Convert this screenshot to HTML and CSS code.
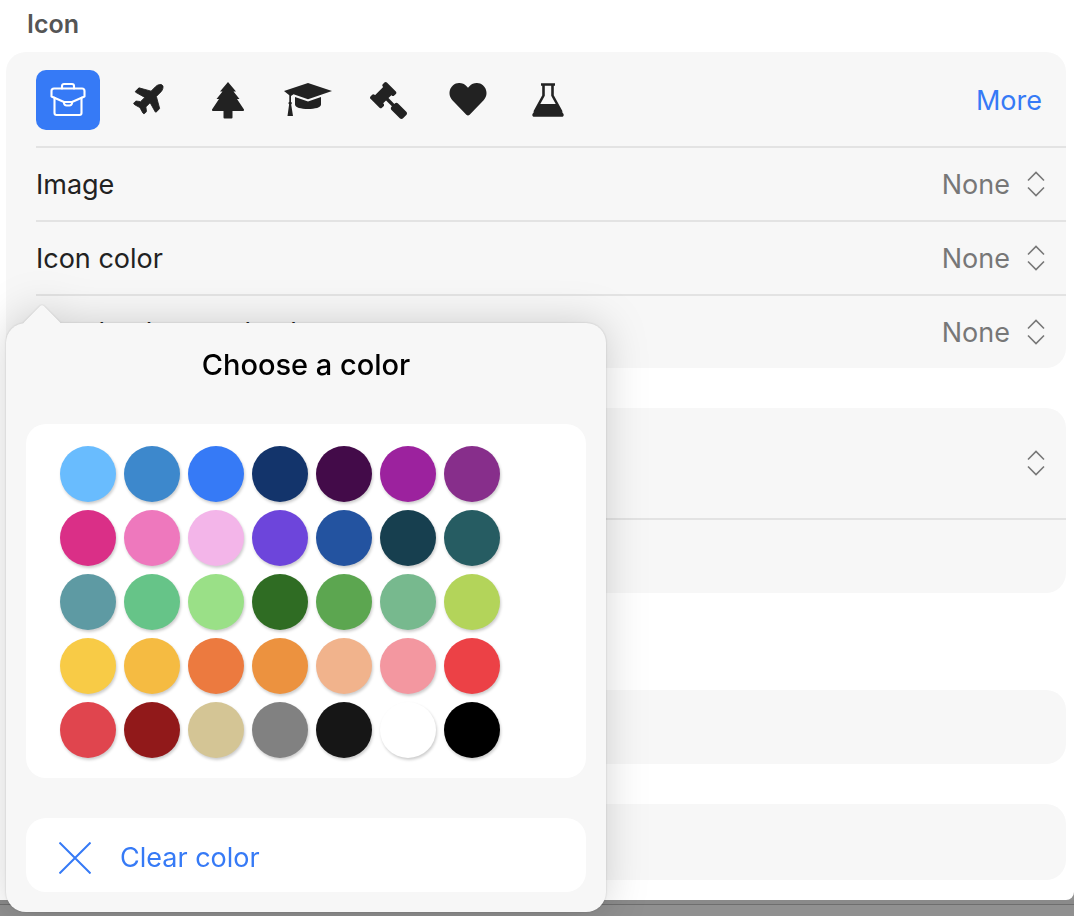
FILE: index.html
```html
<!DOCTYPE html>
<html lang="en">
<head>
<meta charset="utf-8">
<title>Icon settings</title>
<link rel="stylesheet" href="styles.css">
</head>
<body>
<main class="sheet">
  <h2 class="heading">Icon</h2>
  <section class="card">
    <div class="icon-row">
      <button class="icon-btn selected">
        <svg width="36" height="36" viewBox="0 0 36 36" fill="none" stroke="#fff" stroke-width="2.1" stroke-linejoin="round" stroke-linecap="round"><path d="M12 6.500V4a2 2 0 0 1 2-2h8a2 2 0 0 1 2 2v2.500"/><path d="M1.500 14.500V9A2.500 2.500 0 0 1 4 6.500h28A2.500 2.500 0 0 1 34.500 9v5.500L22 20h-8z"/><path d="M4.500 15.700V31a2 2 0 0 0 2 2h23a2 2 0 0 0 2-2V15.700"/><path d="M14 20v1a2.500 2.500 0 0 0 2.500 2.500h3A2.500 2.500 0 0 0 22 21v-1"/></svg>
      </button>
      <button class="icon-btn">
        <svg class="plane" width="34" height="30" viewBox="0 0 576 512"><path fill="#222" stroke="#222" stroke-width="14" d="M480 192H365.710L260.610 8.060A16.014 16.014 0 0 0 246.710 0h-65.500c-10.630 0-18.300 10.170-15.380 20.390L214.860 192H112l-43.200-57.600c-3.020-4.030-7.770-6.400-12.800-6.400H16.010C5.600 128-2.040 137.780.49 147.880L32 256 .49 364.120C-2.040 374.220 5.600 384 16.010 384H56c5.040 0 9.780-2.370 12.800-6.400L112 320h102.860l-49.030 171.600c-2.920 10.220 4.750 20.400 15.380 20.400h65.500c5.740 0 11.040-3.080 13.890-8.060L365.710 320H480c35.350 0 96-28.650 96-64s-60.650-64-96-64z"/></svg>
      </button>
      <button class="icon-btn">
        <svg width="32" height="38" viewBox="0 0 32 38"><path fill="#222" d="M16 1l8 9.500h-2.500l6 7.500h-2.500L32 28.500c.4.800 0 1.500-1 1.500H20.500v6.500a1 1 0 0 1-1 1h-7a1 1 0 0 1-1-1V30H1c-1 0-1.400-.7-1-1.500L7 18H4.500l6-7.500H8z"/></svg>
      </button>
      <button class="icon-btn">
        <svg width="48" height="34" viewBox="0 0 48 34"><path fill="#222" d="M24 0l24 8-24 8.200-14.500-5L7 13v5.800l1 1.300-.8 1.400L9 33H3.500l1.600-11.500-.8-1.400 1-1.300v-6.500L0 8z"/><path fill="#222" d="M11 14l13 4.500L37 14v7.500C37 24.500 31 26 24 26s-13-1.500-13-4.500z"/></svg>
      </button>
      <button class="icon-btn">
        <svg class="flip" width="37" height="37" viewBox="0 0 512 512"><path fill="#222" d="M504.971 199.362l-22.627-22.627c-9.373-9.373-24.569-9.373-33.941 0l-5.657 5.657L329.608 69.255l5.657-5.657c9.373-9.373 9.373-24.569 0-33.941L312.638 7.029c-9.373-9.373-24.569-9.373-33.941 0L154.246 131.480c-9.373 9.373-9.373 24.569 0 33.941l22.627 22.627c9.373 9.373 24.569 9.373 33.941 0l5.657-5.657 39.598 39.598-81.040 81.040-5.657-5.657c-12.497-12.497-32.758-12.497-45.255 0L9.373 412.118c-12.497 12.497-12.497 32.758 0 45.255l45.255 45.255c12.497 12.497 32.758 12.497 45.255 0l114.745-114.745c12.497-12.497 12.497-32.758 0-45.255l-5.657-5.657 81.040-81.040 39.598 39.598-5.657 5.657c-9.373 9.373-9.373 24.569 0 33.941l22.627 22.627c9.373 9.373 24.569 9.373 33.941 0l124.451-124.451c9.372-9.372 9.372-24.568 0-33.941z"/></svg>
      </button>
      <button class="icon-btn">
        <svg width="38" height="34" viewBox="0 0 512 470"><path fill="#222" d="M462.300 30.600C407.500-16.100 326-7.700 275.700 44.200L256 64.500l-19.700-20.300C186.100-7.700 104.500-16.100 49.700 30.600c-62.800 53.600-66.100 149.800-9.900 207.900l193.500 199.800c12.500 12.900 32.800 12.900 45.300 0l193.500-199.800c56.300-58.100 53-154.300-9.800-207.900z"/></svg>
      </button>
      <button class="icon-btn">
        <svg width="32" height="34" viewBox="0 0 32 34" fill="none"><path stroke="#222" stroke-width="2.600" d="M9 1.500h14M11.500 1.500v11L2.500 29M20.500 1.500v11L29.500 29"/><path fill="#222" d="M7.300 21h17.400L31.500 31c.6 1.300-.2 2.700-1.600 2.700H2.100C.7 33.700-.1 32.300.5 31z"/></svg>
      </button>
      <a class="more">More</a>
    </div>
    <div class="row"><span>Image</span><span class="value">None<svg class="updown" width="18" height="26" viewBox="0 0 18 26" fill="none"><path d="M1 9.500L9 1.500l8 8M1 16.500l8 8 8-8"/></svg></span></div>
    <div class="row"><span>Icon color</span><span class="value">None<svg class="updown" width="18" height="26" viewBox="0 0 18 26" fill="none"><path d="M1 9.500L9 1.500l8 8M1 16.500l8 8 8-8"/></svg></span></div>
    <div class="row"><span>Icon background color</span><span class="value">None<svg class="updown" width="18" height="26" viewBox="0 0 18 26" fill="none"><path d="M1 9.500L9 1.500l8 8M1 16.500l8 8 8-8"/></svg></span></div>
  </section>
  <section class="card card-two">
    <div class="tall-row"><svg class="updown" width="18" height="26" viewBox="0 0 18 26" fill="none"><path d="M1 9.500L9 1.500l8 8M1 16.500l8 8 8-8"/></svg></div>
    <div class="short-row"></div>
  </section>
  <section class="card card-three"></section>
  <section class="card card-four"></section>
</main>

<aside class="popover">
  <div class="arrow"></div>
  <h3 class="pop-title">Choose a color</h3>
  <div class="panel palette">
    <span class="dot c1"></span><span class="dot c2"></span><span class="dot c3"></span><span class="dot c4"></span><span class="dot c5"></span><span class="dot c6"></span><span class="dot c7"></span>
    <span class="dot c8"></span><span class="dot c9"></span><span class="dot c10"></span><span class="dot c11"></span><span class="dot c12"></span><span class="dot c13"></span><span class="dot c14"></span>
    <span class="dot c15"></span><span class="dot c16"></span><span class="dot c17"></span><span class="dot c18"></span><span class="dot c19"></span><span class="dot c20"></span><span class="dot c21"></span>
    <span class="dot c22"></span><span class="dot c23"></span><span class="dot c24"></span><span class="dot c25"></span><span class="dot c26"></span><span class="dot c27"></span><span class="dot c28"></span>
    <span class="dot c29"></span><span class="dot c30"></span><span class="dot c31"></span><span class="dot c32"></span><span class="dot c33"></span><span class="dot c34"></span><span class="dot c35"></span>
  </div>
  <div class="panel clear">
    <svg width="32" height="32" viewBox="0 0 32 32" fill="none" stroke="#367af6" stroke-width="2"><path d="M.5.500l31 31M31.500.500l-31 31"/></svg>
    <span class="clear-label">Clear color</span>
  </div>
</aside>
</body>
</html>
```
FILE: styles.css
```css
* { box-sizing: border-box; }
html, body { height: 100%; }
body {
  margin: 0;
  height: 916px;
  overflow: hidden;
  position: relative;
  font-family: Inter, "Liberation Sans", sans-serif;
  color: #222;
  background: linear-gradient(#8a8a8a 0 4px, #6e6e6e 4px 5px, #909090 5px) 0 900px / 100% 16px no-repeat, #909090;
}
.sheet {
  height: 900px;
  background: #fff;
  border-bottom-right-radius: 8px;
  padding: 8px 8px 0 6px;
}
.heading {
  margin: 0 0 12px 21px;
  height: 32px;
  font-size: 25px;
  line-height: 32px;
  font-weight: 600;
  color: #555;
}
.card { background: #f7f7f7; border-radius: 20px; }
.icon-row {
  display: flex;
  align-items: center;
  gap: 16px;
  margin-left: 30px;
  padding: 18px 24px 16px 0;
  height: 94px;
}
.icon-btn {
  width: 64px;
  height: 60px;
  padding: 0;
  border: 0;
  border-radius: 10px;
  background: none;
  display: flex;
  align-items: center;
  justify-content: center;
}
.icon-btn.selected { background: #367af6; }
.plane { transform: translate(2.5px, -3px) rotate(-45deg); }
.flip { transform: scaleX(-1); }
.more { margin-left: auto; font-size: 27px; color: #367af6; }
.row {
  height: 74px;
  margin-left: 30px;
  padding-right: 21px;
  border-top: 2px solid #e3e3e3;
  display: flex;
  align-items: center;
  justify-content: space-between;
  font-size: 27px;
}
.value { display: flex; align-items: center; gap: 17px; color: #777; }
.updown path { stroke: #777; stroke-width: 1.6; }
.card-two { margin-top: 40px; }
.tall-row {
  height: 112px;
  margin-left: 30px;
  padding-right: 21px;
  border-bottom: 2px solid #e3e3e3;
  display: flex;
  align-items: center;
  justify-content: flex-end;
}
.short-row { height: 73px; }
.card-three { margin-top: 97px; height: 74px; }
.card-four { margin-top: 40px; height: 76px; }

.popover {
  position: absolute;
  left: 6px;
  top: 323px;
  width: 600px;
  height: 589px;
  padding: 0 20px;
  background: #f7f7f7;
  border-radius: 20px;
  filter: drop-shadow(0 0 1px rgba(0,0,0,.16)) drop-shadow(0 0 20px rgba(0,0,0,.17));
}
.arrow {
  position: absolute;
  left: 22px;
  top: -13px;
  width: 28px;
  height: 28px;
  background: #f7f7f7;
  border-radius: 3px;
  transform: rotate(45deg);
}
.pop-title {
  position: relative;
  margin: 0;
  height: 101px;
  padding-top: 22px;
  text-align: center;
  font-size: 29px;
  line-height: 40px;
  font-weight: 500;
  color: #000;
}
.panel { background: #fff; border-radius: 20px; }
.palette {
  height: 354px;
  padding: 22px 34px 20px;
  display: grid;
  grid-template-columns: repeat(7, 56px);
  grid-auto-rows: 56px;
  gap: 8px;
}
.dot { border-radius: 50%; box-shadow: 1px 2px 3px rgba(0,0,0,.2); }
.clear {
  margin-top: 40px;
  height: 74px;
  padding: 6px 0 0 33px;
  display: flex;
  align-items: center;
  gap: 29px;
  font-size: 27px;
  color: #367af6;
}
.clear-label { margin-top: -2px; }
.c1{background:#69bcfe}.c2{background:#3d88cc}.c3{background:#367af6}.c4{background:#13346b}.c5{background:#430b49}.c6{background:#9c229e}.c7{background:#872e8b}
.c8{background:#da2f87}.c9{background:#ee78bd}.c10{background:#f3b5e9}.c11{background:#6d45db}.c12{background:#2353a0}.c13{background:#173f4f}.c14{background:#265c62}
.c15{background:#5e9aa3}.c16{background:#66c488}.c17{background:#9ae087}.c18{background:#2f6c23}.c19{background:#5ca650}.c20{background:#77b98e}.c21{background:#b3d45a}
.c22{background:#f8cb46}.c23{background:#f5bb42}.c24{background:#ec7a3f}.c25{background:#ec923f}.c26{background:#f1b38c}.c27{background:#f397a0}.c28{background:#ec4146}
.c29{background:#e0454e}.c30{background:#91191a}.c31{background:#d4c595}.c32{background:#818181}.c33{background:#161616}.c34{background:#fff}.c35{background:#000}
```
